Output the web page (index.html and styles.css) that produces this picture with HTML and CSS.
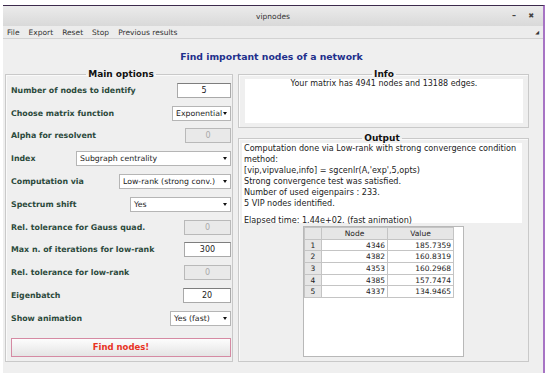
FILE: index.html
```html
<!DOCTYPE html>
<html lang="en">
<head>
  <meta charset="UTF-8" />
  <title>vipnodes</title>
  <link rel="stylesheet" href="styles.css">
</head>
<body>
  <div class="window">
    <div class="titlebar">
      <span class="title">vipnodes</span>
      <span class="wbtn min">&#8211;</span>
      <span class="wbtn close">&#10006;</span>
    </div>
    <div class="menubar">
      <span>File</span>
      <span>Export</span>
      <span>Reset</span>
      <span>Stop</span>
      <span>Previous results</span>
      <span class="menu-arrow">&#9698;</span>
    </div>

    <div class="content">
      <h1>Find important nodes of a network</h1>

      <div class="panels">
        <fieldset class="box main-options">
          <legend>Main options</legend>

          <div class="row">
            <label>Number of nodes to identify</label>
            <div class="field w54">5</div>
          </div>
          <div class="row">
            <label>Choose matrix function</label>
            <div class="select w59"><span>Exponential</span><i></i></div>
          </div>
          <div class="row">
            <label>Alpha for resolvent</label>
            <div class="field disabled w46">0</div>
          </div>
          <div class="row">
            <label>Index</label>
            <div class="select w155"><span>Subgraph centrality</span><i></i></div>
          </div>
          <div class="row">
            <label>Computation via</label>
            <div class="select w112"><span>Low-rank (strong conv.)</span><i></i></div>
          </div>
          <div class="row">
            <label>Spectrum shift</label>
            <div class="select w101"><span>Yes</span><i></i></div>
          </div>
          <div class="row">
            <label>Rel. tolerance for Gauss quad.</label>
            <div class="field disabled w47">0</div>
          </div>
          <div class="row">
            <label>Max n. of iterations for low-rank</label>
            <div class="field w47">300</div>
          </div>
          <div class="row">
            <label>Rel. tolerance for low-rank</label>
            <div class="field disabled w47">0</div>
          </div>
          <div class="row">
            <label>Eigenbatch</label>
            <div class="field w48">20</div>
          </div>
          <div class="row">
            <label>Show animation</label>
            <div class="select w61"><span>Yes (fast)</span><i></i></div>
          </div>

          <button class="find">Find nodes!</button>
        </fieldset>

        <div class="right">
          <fieldset class="box info">
            <legend>Info</legend>
            <div class="info-text">Your matrix has 4941 nodes and 13188 edges.</div>
          </fieldset>

          <fieldset class="box output">
            <legend>Output</legend>
            <div class="out-text">
              Computation done via Low-rank with strong convergence condition<br>
              method:<br>
              [vip,vipvalue,info] = sgcenlr(A,'exp',5,opts)<br>
              Strong convergence test was satisfied.<br>
              Number of used eigenpairs : 233.<br>
              5 VIP nodes identified.<br>
              <span class="gap"></span>
              Elapsed time: 1.44e+02. (fast animation)
            </div>

            <div class="table-wrap">
              <table class="results">
                <tr><th class="corner"></th><th>Node</th><th>Value</th></tr>
                <tr><th>1</th><td>4346</td><td>185.7359</td></tr>
                <tr><th>2</th><td>4382</td><td>160.8319</td></tr>
                <tr><th>3</th><td>4353</td><td>160.2968</td></tr>
                <tr><th>4</th><td>4385</td><td>157.7474</td></tr>
                <tr><th>5</th><td>4337</td><td>134.9465</td></tr>
              </table>
            </div>
          </fieldset>
        </div>
      </div>
    </div>
  </div>
</body>
</html>
```

FILE: styles.css
```css
body {
  margin: 0;
  background: #fff;
  font-family: 'DejaVu Sans', sans-serif;
  color: #222;
}

.window {
  margin: 5px 0 0 3px;
  width: 540px;
  border-top: 1px solid #3c2a4c;
  border-right: 2px solid #a774c4;
  background: #efefef;
  height: 368px;
}

.titlebar {
  height: 20px;
  background: linear-gradient(#ebebeb, #d9d9d9);
  display: flex;
  align-items: center;
  justify-content: center;
  position: relative;
  font-size: 7.5px;
  color: #333;
}

.wbtn {
  position: absolute;
  top: 5px;
  font-size: 8px;
  font-weight: bold;
  color: #444;
}

.wbtn.min { right: 27px; }
.wbtn.close { right: 9px; font-size: 7px; top: 6px; }

.menubar {
  height: 12px;
  background: #ececec;
  border-bottom: 1px solid #d2d2d2;
  display: flex;
  align-items: center;
  font-size: 7.5px;
  color: #333;
  padding-left: 4px;
  gap: 9px;
}

.menu-arrow {
  margin-left: auto;
  margin-right: 4px;
  font-size: 5px;
}

.content {
  padding: 0 15px 0 2px;
}

h1 {
  margin: 0;
  height: 31px;
  line-height: 35px;
  text-align: center;
  font-size: 9.3px;
  color: #1e2f8c;
  padding-left: 10px;
}

.panels {
  display: flex;
  gap: 5px;
}

.box {
  margin: 0;
  border: 1px solid #c9c9c9;
  box-shadow: inset 1px 1px 0 #fafafa;
}

.box legend {
  margin: 0 auto;
  padding: 0 2px;
  font-size: 9px;
  font-weight: bold;
  color: #111;
  line-height: 9px;
}

.main-options {
  width: 227px;
  box-sizing: border-box;
  padding: 0 1px 6px 5px;
  height: 292px;
}

.row {
  height: 22.8px;
  display: flex;
  align-items: center;
  justify-content: space-between;
}

.row label {
  font-size: 7.85px;
  font-weight: bold;
  color: #2c4a3c;
}

.field {
  height: 15px;
  box-sizing: border-box;
  background: #fff;
  border: 1px solid #a9a9a9;
  border-top-color: #7e7e7e;
  font-size: 8px;
  text-align: center;
  line-height: 13px;
  color: #222;
}

.field.disabled {
  background: #e9e9e9;
  border-color: #b9b9b9;
  color: #aaa;
}

.select {
  height: 15px;
  box-sizing: border-box;
  background: #fff;
  border: 1px solid #b5b5b5;
  display: flex;
  align-items: center;
  justify-content: space-between;
  padding: 0 3px 0 3px;
  font-size: 7.8px;
  color: #222;
}

.select i {
  width: 0;
  height: 0;
  border-left: 2.5px solid transparent;
  border-right: 2.5px solid transparent;
  border-top: 3px solid #111;
}

.w46 { width: 46px; }
.w47 { width: 47px; }
.w48 { width: 48px; }
.w54 { width: 54px; }
.w59 { width: 59px; }
.w61 { width: 61px; }
.w101 { width: 101px; }
.w112 { width: 112px; }
.w155 { width: 155px; }

.find {
  display: block;
  margin-top: 8px;
  width: 220px;
  height: 19px;
  border: 1px solid #d58aa3;
  background: linear-gradient(#fdfdfd, #e4e4e4);
  color: #e8331f;
  font-family: 'DejaVu Sans', sans-serif;
  font-size: 8.5px;
  font-weight: bold;
  padding: 0;
}

.right {
  display: flex;
  flex-direction: column;
  gap: 6px;
}

.info {
  width: 291px;
  box-sizing: border-box;
  padding: 0 5px 7px 6px;
  height: 58px;
}

.info-text {
  background: #fff;
  height: 44px;
  text-align: center;
  font-size: 8px;
  line-height: 10px;
}

.output {
  width: 291px;
  box-sizing: border-box;
  padding: 0 6px 6px 3px;
  height: 228px;
}

.out-text {
  background: #fff;
  height: 80px;
  font-size: 8.1px;
  line-height: 11px;
  color: #222;
  padding-left: 2px;
}

.gap {
  display: block;
  height: 6px;
}

.table-wrap {
  margin: 3px 0 0 61px;
  width: 161px;
  height: 131px;
  box-sizing: border-box;
  background: #fff;
  border: 1px solid #b8b8b8;
}

.results {
  border-collapse: collapse;
  font-size: 7.5px;
  line-height: 9px;
  color: #222;
}

.results th,
.results td {
  height: 10.7px;
  padding: 0 2px;
  border: 1px solid #c4c4c4;
}

.results th {
  background: #e6e6e6;
  font-weight: normal;
  width: 12px;
  text-align: center;
}

.results tr:first-child th {
  width: 61px;
}

.results tr:first-child th.corner {
  width: 12px;
}

.results td {
  text-align: right;
  width: 61px;
}
```
